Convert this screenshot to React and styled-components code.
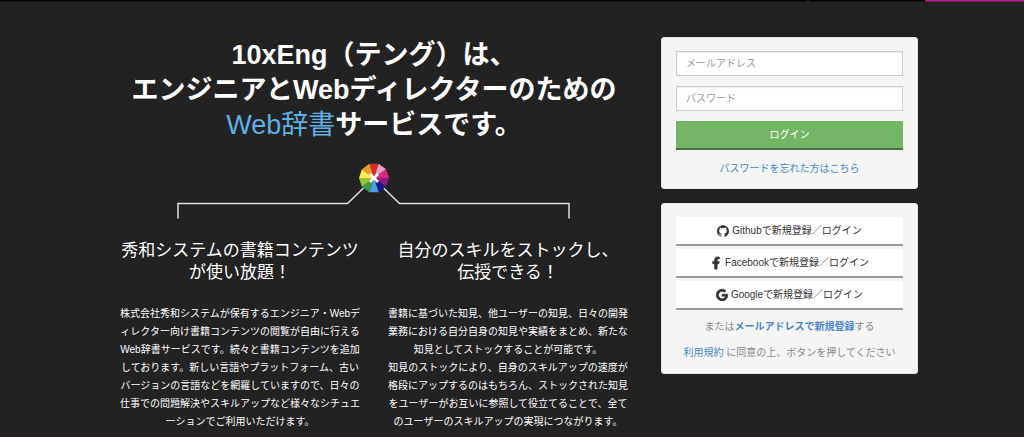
import React, { useState } from "react";
import styled, { createGlobalStyle } from "styled-components";
import { FaFacebookF, FaGoogle } from "react-icons/fa";
import { ImGithub } from "react-icons/im";

const GlobalStyle = createGlobalStyle`
    * {
        box-sizing: border-box;
    }
    body {
        margin: 0;
        background: #222;
        color: #fff;
        font-family: "Liberation Sans", "Noto Sans CJK JP", sans-serif;
        font-size: 10px;
        line-height: 18px;
    }
`;

const wheelColors = ["#d92d20", "#e79cc2", "#d82b80", "#8a1b83", "#1a1a86", "#4a9fe0", "#3f9a48", "#97c33c", "#fcee4b", "#eb9b30"];

// 色相環の1枚分の頂点を計算
const wedgePoints = (index) => {
    const point = (deg) => {
        const rad = (deg * Math.PI) / 180;
        return `${197 + 15 * Math.sin(rad)},${14 - 15 * Math.cos(rad)}`;
    };
    return `197,14 ${point(index * 36 - 18)} ${point(index * 36 + 18)}`;
};

const LogoConnector = () => (
    <Connector viewBox="0 -1 394 56" aria-hidden="true">
        <path d="M1 54.5V39.5H170.5L186.5 24M206.5 24L222.5 39.5H392V54.5" fill="none" stroke="#e0e0e0" strokeWidth="1.5" />
        {wheelColors.map((color, index) => (
            <polygon key={color} points={wedgePoints(index)} fill={color} />
        ))}
        <path d="M193 10L201 18M201 10L193 18" stroke="#fff" strokeWidth="2.6" />
    </Connector>
);

// strokeWidth はアイコンの線を太くするため
const socials = [
    { name: "Github", Icon: ImGithub, strokeWidth: 0 },
    { name: "Facebook", Icon: FaFacebookF, strokeWidth: 36 },
    { name: "Google", Icon: FaGoogle, strokeWidth: 28 },
];

const App = () => {
    const [email, setEmail] = useState("");
    const [password, setPassword] = useState("");

    return (
        <Page>
            <GlobalStyle />
            <TopBar>
                <TopBarMenu />
                <TopBarItem />
                <TopBarAccent />
            </TopBar>
            <Container>
                <Intro>
                    <Title>
                        10xEng（テング）は、
                        <br />
                        エンジニアとWebディレクターのための
                        <br />
                        <em>Web辞書</em>サービスです。
                    </Title>
                    <LogoConnector />
                    <Features>
                        <Feature>
                            <FeatureTitle>
                                秀和システムの書籍コンテンツ
                                <br />
                                が使い放題！
                            </FeatureTitle>
                            <FeatureText>
                                株式会社秀和システムが保有するエンジニア・Webディレクター向け書籍コンテンツの閲覧が自由に行えるWeb辞書サービスです。続々と書籍コンテンツを追加しております。新しい言語やプラットフォーム、古いバージョンの言語などを網羅していますので、日々の仕事での問題解決やスキルアップなど様々なシチュエーションでご利用いただけます。
                            </FeatureText>
                        </Feature>
                        <Feature>
                            <FeatureTitle>
                                自分のスキルをストックし、
                                <br />
                                伝授できる！
                            </FeatureTitle>
                            <FeatureText>
                                書籍に基づいた知見、他ユーザーの知見、日々の開発業務における自分自身の知見や実績をまとめ、新たな知見としてストックすることが可能です。
                                <br />
                                知見のストックにより、自身のスキルアップの速度が格段にアップするのはもちろん、ストックされた知見をユーザーがお互いに参照して役立てることで、全てのユーザーのスキルアップの実現につながります。
                            </FeatureText>
                        </Feature>
                    </Features>
                </Intro>
                <Side>
                    <LoginForm onSubmit={(e) => e.preventDefault()}>
                        <Input
                            type="email"
                            aria-label="メールアドレス"
                            placeholder="メールアドレス"
                            value={email}
                            onChange={(e) => setEmail(e.target.value)}
                        />
                        <Input
                            type="password"
                            aria-label="パスワード"
                            placeholder="パスワード"
                            value={password}
                            onChange={(e) => setPassword(e.target.value)}
                        />
                        <LoginButton type="submit">ログイン</LoginButton>
                        <Note>
                            <Link href="#password">パスワードを忘れた方はこちら</Link>
                        </Note>
                    </LoginForm>
                    <SignupPanel>
                        <SocialList>
                            {socials.map(({ name, Icon, strokeWidth }) => (
                                <SocialButton key={name} type="button">
                                    <Icon strokeWidth={strokeWidth} />
                                    {name}で新規登録／ログイン
                                </SocialButton>
                            ))}
                        </SocialList>
                        <Note>
                            または
                            <Link href="#signup" $bold>
                                メールアドレスで新規登録
                            </Link>
                            する
                        </Note>
                        <Note>
                            <Link href="#terms">利用規約</Link> に同意の上、ボタンを押してください
                        </Note>
                    </SignupPanel>
                </Side>
            </Container>
            <BottomLine />
        </Page>
    );
};

export default App;

const Page = styled.div`
    display: flex;
    flex-direction: column;
    min-height: 100vh;
`;

const TopBar = styled.header`
    display: flex;
    height: 2px;
`;

const TopBarMenu = styled.div`
    flex: 1;
    background: #000;
    border-bottom: 1px solid #181818;
`;

const TopBarItem = styled.div`
    width: 118px;
    background: #000;
    border-left: 2px solid #222;
    border-bottom: 1px solid #181818;
`;

const TopBarAccent = styled.div`
    width: 99px;
    background: #b51f86;
    border-bottom: 1px solid #6c2055;
`;

const Container = styled.main`
    display: grid;
    grid-template-columns: 1fr 257px;
    gap: 19px;
    align-items: start;
    flex: 1;
    width: 100%;
    max-width: 812px;
    margin: 0 auto;
    padding-top: 35px;
`;

const Intro = styled.section`
    padding-top: 1px;
    text-align: center;
`;

const Title = styled.h1`
    margin: 0 0 20px;
    font-size: 27px;
    line-height: 35px;
    font-weight: 700;

    em {
        color: #5fb0e5;
        font-style: normal;
        font-weight: 400;
    }
`;

const Connector = styled.svg`
    display: block;
    width: 394px;
    max-width: 100%;
    height: 56px;
    margin: 0 auto 21px;
`;

const Features = styled.div`
    display: grid;
    grid-template-columns: 1fr 1fr;
`;

const Feature = styled.article`
    padding: 0 12px;
`;

const FeatureTitle = styled.h2`
    margin: 0 0 21px;
    font-size: 17px;
    line-height: 22px;
    font-weight: 400;
`;

const FeatureText = styled.p`
    margin: 0;
    line-break: loose;
`;

const Side = styled.aside`
    display: flex;
    flex-direction: column;
    gap: 14px;
`;

const Panel = styled.div`
    display: flex;
    flex-direction: column;
    padding: 13px 14px 10px;
    background: #f5f5f5;
    border: 1px solid #e3e3e3;
    border-radius: 3px;
`;

const LoginForm = styled(Panel).attrs({ as: "form" })`
    gap: 10px;
`;

const SignupPanel = styled(Panel)`
    gap: 8px;
    padding-bottom: 11px;
`;

const Input = styled.input`
    width: 100%;
    height: 25px;
    padding: 0 9px;
    background: #fff;
    border: 1px solid #ccc;
    border-radius: 0;
    box-shadow: inset 0 1px 1px rgba(0, 0, 0, 0.08);
    color: #555;
    font: inherit;

    &::placeholder {
        color: #999;
    }
`;

const Button = styled.button`
    display: flex;
    align-items: center;
    justify-content: center;
    gap: 3px;
    width: 100%;
    height: 29px;
    padding: 1px 0 0;
    border: 0;
    font: inherit;
    cursor: pointer;

    svg {
        width: auto;
        height: 12px;
        overflow: visible;
    }
`;

const LoginButton = styled(Button)`
    background: #75b666;
    border-bottom: 2px solid #47763c;
    color: #fff;
`;

const SocialList = styled.div`
    display: flex;
    flex-direction: column;
    gap: 3px;
`;

const SocialButton = styled(Button)`
    background: #fff;
    border-bottom: 2px solid #999;
    color: #333;
`;

const Note = styled.p`
    margin: 0;
    color: #888;
    text-align: center;
`;

const Link = styled.a`
    color: #4a86c5;
    font-weight: ${({ $bold }) => ($bold ? 700 : 400)};
    text-decoration: none;
`;

const BottomLine = styled.footer`
    height: 1px;
    background: #2b1924;
`;
